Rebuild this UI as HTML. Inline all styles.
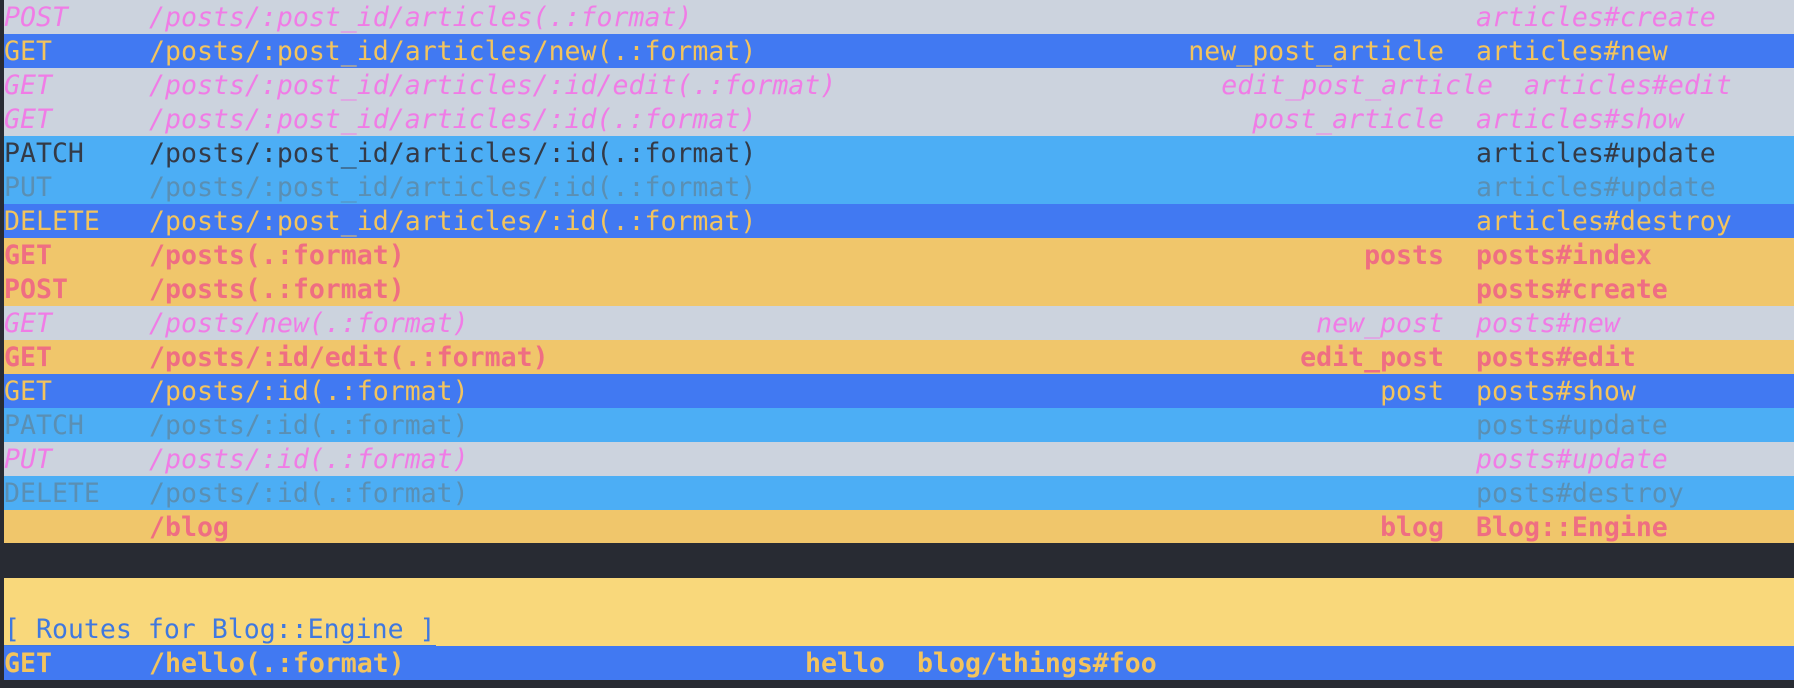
<!DOCTYPE html>
<html><head><meta charset="utf-8"><style>
html,body{margin:0;padding:0;background:#282b33;width:1794px;height:688px;overflow:hidden}
body{position:relative;font-family:"DejaVu Sans Mono","Liberation Mono",monospace;font-size:26.55px}
.r{position:absolute;left:4px;width:1790px;height:34px;line-height:36px;white-space:pre}
.r span{position:absolute;top:0}
.m{left:0}.p{left:145px}.n{right:350px;text-align:right}.a{left:1472px}
.g{background:#ccd3de;color:#f07ce6;font-style:italic}
.b{background:#4179f2;color:#f3c45d}
.l{background:#4caef5;color:#343a46}
.l2{background:#4caef5;color:#5a8fb3}
.y{background:#f0c66b;color:#ef6e82;font-weight:bold}
</style></head><body>
<div class="r g" style="top:0"><span class="m">POST</span><span class="p">/posts/:post_id/articles(.:format)</span><span class="a">articles#create</span></div>
<div class="r b" style="top:34px"><span class="m">GET</span><span class="p">/posts/:post_id/articles/new(.:format)</span><span class="n">new_post_article</span><span class="a">articles#new</span></div>
<div class="r g" style="top:68px"><span class="m">GET</span><span class="p">/posts/:post_id/articles/:id/edit(.:format)</span><span class="n" style="right:301px">edit_post_article</span><span class="a" style="left:1520px">articles#edit</span></div>
<div class="r g" style="top:102px"><span class="m">GET</span><span class="p">/posts/:post_id/articles/:id(.:format)</span><span class="n">post_article</span><span class="a">articles#show</span></div>
<div class="r l" style="top:136px"><span class="m">PATCH</span><span class="p">/posts/:post_id/articles/:id(.:format)</span><span class="a">articles#update</span></div>
<div class="r l2" style="top:170px"><span class="m">PUT</span><span class="p">/posts/:post_id/articles/:id(.:format)</span><span class="a">articles#update</span></div>
<div class="r b" style="top:204px"><span class="m">DELETE</span><span class="p">/posts/:post_id/articles/:id(.:format)</span><span class="a">articles#destroy</span></div>
<div class="r y" style="top:238px"><span class="m">GET</span><span class="p">/posts(.:format)</span><span class="n">posts</span><span class="a">posts#index</span></div>
<div class="r y" style="top:272px"><span class="m">POST</span><span class="p">/posts(.:format)</span><span class="a">posts#create</span></div>
<div class="r g" style="top:306px"><span class="m">GET</span><span class="p">/posts/new(.:format)</span><span class="n">new_post</span><span class="a">posts#new</span></div>
<div class="r y" style="top:340px"><span class="m">GET</span><span class="p">/posts/:id/edit(.:format)</span><span class="n">edit_post</span><span class="a">posts#edit</span></div>
<div class="r b" style="top:374px"><span class="m">GET</span><span class="p">/posts/:id(.:format)</span><span class="n">post</span><span class="a">posts#show</span></div>
<div class="r l2" style="top:408px"><span class="m">PATCH</span><span class="p">/posts/:id(.:format)</span><span class="a">posts#update</span></div>
<div class="r g" style="top:442px"><span class="m">PUT</span><span class="p">/posts/:id(.:format)</span><span class="a">posts#update</span></div>
<div class="r l2" style="top:476px"><span class="m">DELETE</span><span class="p">/posts/:id(.:format)</span><span class="a">posts#destroy</span></div>
<div class="r y" style="top:510px;height:33px"><span class="p">/blog</span><span class="n">blog</span><span class="a">Blog::Engine</span></div>
<div style="position:absolute;left:4px;top:578px;width:1790px;height:68px;background:#f9d87b">
<span style="position:absolute;left:0;top:36px;color:#3f78e0;white-space:pre;border-bottom:1px solid #3f78e0;line-height:31px">[ Routes for Blog::Engine ]</span></div>
<div class="r b" style="top:646px;font-weight:bold"><span class="m">GET</span><span class="p">/hello(.:format)</span><span style="left:801px">hello</span><span style="left:913px">blog/things#foo</span></div>
</body></html>
